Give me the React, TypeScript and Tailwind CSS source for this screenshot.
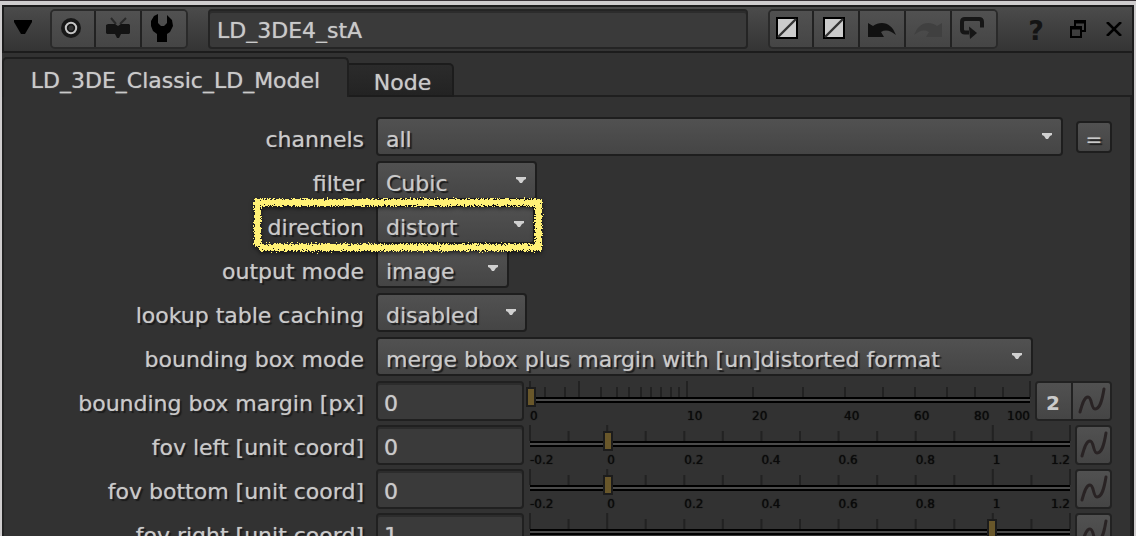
import { useState } from "react";
import type { ReactNode } from "react";

const BUTTON_FACE = "bg-linear-to-b from-[#515151] to-[#454545]";
const LABEL_SHADOW = "[text-shadow:0_0_1px_#8a8a8a,2px_2px_1px_#1a1a1a]";
const SOFT_GLOW = "[text-shadow:0_0_1px_#a0a0a0]";

type Tick = { at: number; major?: boolean };
type Mark = { at: number; text: string };
type Scale = { start: number; end: number; ticks: Tick[]; marks: Mark[] };

const marginScale: Scale = {
  start: 0,
  end: 100,
  ticks: [
    { at: 0, major: true },
    { at: 3 },
    { at: 7 },
    { at: 9.8, major: true },
    { at: 14.2 },
    { at: 17.4 },
    { at: 19.8 },
    { at: 22.2 },
    { at: 24.2 },
    { at: 26.2 },
    { at: 28.2 },
    { at: 29.8 },
    { at: 31.4, major: true },
    { at: 44.6 },
    { at: 54.6 },
    { at: 63 },
    { at: 70.6 },
    { at: 77 },
    { at: 83.4 },
    { at: 89 },
    { at: 94.6 },
    { at: 100, major: true },
  ],
  marks: [
    { at: 0, text: "0" },
    { at: 31.4, text: "10" },
    { at: 44.4, text: "20" },
    { at: 62.8, text: "40" },
    { at: 76.8, text: "60" },
    { at: 88.8, text: "80" },
    { at: 100, text: "100" },
  ],
};

const unitScale: Scale = {
  start: -0.2,
  end: 1.2,
  ticks: Array.from({ length: 15 }, (_, i) => ({
    at: (i * 100) / 14,
    major: i === 0 || i === 2 || i === 12 || i === 14,
  })),
  marks: ["-0.2", "0", "0.2", "0.4", "0.6", "0.8", "1", "1.2"].map((text, i) => ({
    at: (i * 100) / 7,
    text,
  })),
};

function Ruler({ scale, value, label }: { scale: Scale; value: number; label: string }) {
  return (
    <div className="relative h-10 min-w-0 flex-1">
      <svg className="absolute inset-0 h-full w-full overflow-visible" aria-hidden="true">
        {scale.ticks.map((t) => (
          <line
            key={t.at}
            x1={`${t.at}%`}
            x2={`${t.at}%`}
            y1={t.major ? 0 : 6}
            y2={16}
            stroke="#222222"
            strokeWidth={2}
          />
        ))}
        <rect x="0" y="16" width="100%" height="6" fill="#000000" />
        <rect x="0" y="18" width="100%" height="2" fill="#4b4b4b" />
        {scale.marks.map((m) => (
          <text
            key={m.text}
            x={`${m.at}%`}
            y={39}
            textAnchor={m.at === 100 ? "end" : "start"}
            fill="#0a0a0a"
            className="text-[12px] [text-shadow:0_0_1px_#0a0a0a]"
          >
            {m.text}
          </text>
        ))}
      </svg>
      <input
        type="range"
        aria-label={label}
        min={scale.start}
        max={scale.end}
        step="any"
        defaultValue={value}
        className="absolute top-1.5 -left-1 h-5 w-[calc(100%+8px)] cursor-pointer appearance-none bg-transparent outline-none [&::-webkit-slider-thumb]:h-5 [&::-webkit-slider-thumb]:w-2.5 [&::-webkit-slider-thumb]:appearance-none [&::-webkit-slider-thumb]:border-2 [&::-webkit-slider-thumb]:border-[#1c1c1c] [&::-webkit-slider-thumb]:bg-[#69572a]"
      />
    </div>
  );
}

function Row({ id, label, children }: { id: string; label: string; children: ReactNode }) {
  return (
    <div className="flex h-10 items-start gap-3">
      <label htmlFor={id} className={`w-90 shrink-0 pt-[9px] text-right leading-7 whitespace-nowrap ${LABEL_SHADOW}`}>
        {label}
      </label>
      <div className="flex min-w-0 flex-1 items-start">{children}</div>
    </div>
  );
}

function Dropdown({ id, value, width }: { id: string; value: string; width: string }) {
  return (
    <div className={`relative ${width}`}>
      <select
        id={id}
        defaultValue={value}
        className={`h-[39px] w-full appearance-none rounded-[4px] border-2 border-[#1e1e1e] pt-1 pl-2 outline-none ${BUTTON_FACE} ${LABEL_SHADOW}`}
      >
        <option>{value}</option>
      </select>
      <svg className="pointer-events-none absolute top-4 right-[11px] h-1.5 w-2.5" viewBox="0 0 10 6" aria-hidden="true">
        <path d="M0 0h10v2l-2 1-2 3H4L2 3 0 2z" fill="#d0d0d0" />
      </svg>
    </div>
  );
}

function NumberField({ id, value }: { id: string; value: string }) {
  return (
    <input
      id={id}
      type="text"
      defaultValue={value}
      className={`mr-1.5 h-10 w-37 shrink-0 rounded-[4px] border-2 border-[#202020] bg-[#3a3a3a] pt-1 pl-1.5 shadow-[inset_0_2px_0_#2c2c2c] outline-none ${SOFT_GLOW}`}
    />
  );
}

function CurveIcon() {
  return (
    <svg className="h-7 w-7" viewBox="0 0 28 28" fill="none" aria-hidden="true">
      <path
        d="M2 25C4 18 6 10 10 10c4 0 3 12 7 12 5 0 7-8 9-20"
        stroke="#292324"
        strokeWidth="3"
        strokeLinecap="round"
      />
    </svg>
  );
}

function CurveButton({ label }: { label: string }) {
  return (
    <button
      type="button"
      aria-label={label}
      className={`ml-[5px] flex h-10 w-[37px] shrink-0 items-center justify-center rounded-[4px] border-2 border-[#222222] ${BUTTON_FACE}`}
    >
      <CurveIcon />
    </button>
  );
}

function UnitRow({ id, label, value }: { id: string; label: string; value: number }) {
  return (
    <Row id={id} label={label}>
      <NumberField id={id} value={String(value)} />
      <Ruler scale={unitScale} value={value} label={`${label} slider`} />
      <CurveButton label={`${label} animation`} />
    </Row>
  );
}

function HandDrawnFrame() {
  return (
    <svg
      className="pointer-events-none absolute -top-[7px] -left-[123px] z-10 h-[54px] w-[290px] overflow-visible drop-shadow-[0_2px_2px_rgba(0,0,0,0.6)]"
      viewBox="0 0 290 54"
      fill="none"
      aria-hidden="true"
    >
      <filter id="chalk" x="-5" y="-5" width="300" height="64" filterUnits="userSpaceOnUse">
        <feTurbulence type="fractalNoise" baseFrequency="0.7" numOctaves="2" seed="7" result="noise" />
        <feDisplacementMap in="SourceGraphic" in2="noise" scale="7" xChannelSelector="R" yChannelSelector="G" />
      </filter>
      <g filter="url(#chalk)" stroke="#fff176" strokeWidth="7">
        <path d="M1 4.5h288" />
        <path d="M4.5 1v47" />
        <path d="M6 49.5h283" />
        <path d="M285.5 1v52" />
      </g>
    </svg>
  );
}

function ToolButton({ label, children }: { label: string; children: ReactNode }) {
  return (
    <button
      type="button"
      aria-label={label}
      className={`flex h-full w-[46px] items-center justify-center border-r-2 border-[#222222] pb-0.5 first:w-11 first:pr-1 last:w-11 last:border-r-0 last:pr-1 ${BUTTON_FACE}`}
    >
      {children}
    </button>
  );
}

function SwatchIcon() {
  return (
    <svg className="mr-1 h-[22px] w-[22px]" viewBox="0 0 22 22" aria-hidden="true">
      <rect x="1" y="1" width="20" height="20" fill="#cccccc" stroke="#000000" strokeWidth="2" />
      <path d="M2 20L20 2" stroke="#333333" strokeWidth="2.4" />
    </svg>
  );
}

function Header() {
  return (
    <header className="flex h-12 shrink-0 items-center border-2 border-[#1c1c1c] bg-linear-to-b from-[#4b4b4b] to-[#343434]">
      <button type="button" aria-label="Collapse panel" className="ml-2.5 flex h-9 w-[18px] items-center">
        <svg className="-mt-1 h-3.5 w-[18px]" viewBox="0 0 18 14" aria-hidden="true">
          <path d="M0 0h18v2L11 14H7L0 2z" fill="#000000" />
        </svg>
      </button>
      <div className="ml-[18px] flex h-10 w-[138px] shrink-0 overflow-hidden rounded-[5px] border-2 border-[#2a2a2a]">
        <ToolButton label="Center node">
          <svg className="h-5 w-5" viewBox="0 0 20 20" aria-hidden="true">
            <circle cx="10" cy="10" r="10" fill="#171717" />
            <circle cx="10" cy="10" r="5.2" fill="none" stroke="#c4c4c4" strokeWidth="2" />
            <circle cx="10" cy="10" r="2.5" fill="#333333" />
          </svg>
        </ToolButton>
        <ToolButton label="Hide input">
          <svg className="h-[22px] w-6" viewBox="0 0 24 22" aria-hidden="true">
            <path d="M5 1l5 6M20 1l-6 6" stroke="#292929" strokeWidth="2" />
            <path d="M2 7h7l3 2 3-2h8l1 1v8l-1 1h-8l-2 4h-2l-2-4H1l-1-1V8z" fill="#131313" />
          </svg>
        </ToolButton>
        <ToolButton label="Manage knobs">
          <svg className="h-7 w-[22px]" viewBox="0 0 22 28" aria-hidden="true">
            <path d="M7 0v9l3 3h3l3-3V1l5 5 1 6-3 6-3 2v8H6v-8l-4-3-2-5V7l3-5z" fill="#000000" />
          </svg>
        </ToolButton>
      </div>
      <input
        type="text"
        aria-label="Node name"
        defaultValue="LD_3DE4_stA"
        className={`mx-5 h-10 min-w-0 flex-1 rounded-[4px] border-2 border-[#242424] bg-[#3a3a3a] pt-0.5 pl-[7px] shadow-[inset_0_2px_0_#2c2c2c] outline-none ${SOFT_GLOW}`}
      />
      <div className="flex h-10 w-[230px] shrink-0 overflow-hidden rounded-[5px] border-2 border-[#2a2a2a]">
        <ToolButton label="Node color">
          <SwatchIcon />
        </ToolButton>
        <ToolButton label="Viewer color">
          <SwatchIcon />
        </ToolButton>
        <ToolButton label="Undo">
          <svg className="mt-1 h-3.5 w-7" viewBox="0 0 28 14" aria-hidden="true">
            <path d="M0 0l5 3C10-1 18-1 22 3c3 2 4 5 6 9-5-4-10-6-15-3l3 5H0z" fill="#111111" />
          </svg>
        </ToolButton>
        <ToolButton label="Redo">
          <svg className="mt-1 h-3.5 w-7" viewBox="0 0 28 14" aria-hidden="true">
            <path d="M28 0l-5 3C18-1 10-1 6 3 3 5 2 8 0 12c5-4 10-6 15-3l-3 5h16z" fill="#404040" />
          </svg>
        </ToolButton>
        <ToolButton label="Revert">
          <svg className="h-[22px] w-6" viewBox="0 0 24 22" aria-hidden="true">
            <path d="M9 15.500H5c-2 0-3-1-3-3V5c0-2 1-3 3-3h14c2 0 3 1 3 3v5.500" fill="none" stroke="#161616" strokeWidth="4" />
            <path d="M9 9.500l8 6.500-7 6z" fill="#161616" />
          </svg>
        </ToolButton>
      </div>
      <button
        type="button"
        aria-label="Help"
        className="ml-7 w-5 pt-1 text-center text-[27px] leading-8 font-bold text-[#141414]"
      >
        ?
      </button>
      <button type="button" aria-label="Float panel" className="ml-6">
        <svg className="h-[18px] w-4" viewBox="0 0 16 18" fill="none" stroke="#000000" strokeWidth="2" aria-hidden="true">
          <path d="M5 7V1h10v10h-4" />
          <path d="M4 2h12" strokeWidth="3" />
          <path d="M1 7h10v10H1z" />
          <path d="M0 8h12" strokeWidth="3" />
        </svg>
      </button>
      <button type="button" aria-label="Close panel" className="mr-2.5 ml-5">
        <svg className="h-3.5 w-4" viewBox="0 0 16 14" aria-hidden="true">
          <path d="M1 0l14 14M15 0L1 14" stroke="#000000" strokeWidth="2.6" />
        </svg>
      </button>
    </header>
  );
}

export default function App() {
  const [tab, setTab] = useState("model");
  return (
    <div className="flex h-screen flex-col overflow-hidden border-t border-[#393337] bg-[#cfcdce] px-0.5 pt-1 font-['DejaVu_Sans',Verdana,sans-serif] text-[22px] text-[#cacaca]">
      <Header />
      <main className="flex min-h-0 flex-1 flex-col border-r-2 border-[#1c1c1c] bg-[#323232] pt-1">
        <div role="tablist" className="flex h-10 shrink-0 items-end">
          <button
            type="button"
            role="tab"
            aria-selected={tab === "model"}
            onClick={() => setTab("model")}
            className={`h-10 w-[347px] rounded-t-[5px] border-2 border-b-0 border-[#1f1f1f] bg-[#323232] pt-1 whitespace-nowrap ${SOFT_GLOW}`}
          >
            LD_3DE_Classic_LD_Model
          </button>
          <button
            type="button"
            role="tab"
            aria-selected={tab === "node"}
            onClick={() => setTab("node")}
            className={`h-[34px] w-[105px] rounded-tr-[5px] border-2 border-l-0 border-[#1c1c1c] bg-linear-to-b from-[#2b2b2b] to-[#232323] pt-1 pl-1 leading-7 ${SOFT_GLOW}`}
          >
            Node
          </button>
          <div className="h-0.5 flex-1 bg-[#1f1f1f]" />
        </div>
        <div className="flex min-h-0 flex-1 flex-col overflow-hidden border-x-2 border-[#222222] pr-[18px] pt-5">
          <div className="flex flex-col gap-1">
            <Row id="channels" label="channels">
              <Dropdown id="channels" value="all" width="flex-1" />
              <button
                type="button"
                aria-label="Channel expression"
                className={`mt-1 ml-[13px] h-8 w-9 shrink-0 rounded-[4px] border-2 border-[#1e1e1e] pt-1 text-[20px] leading-6 ${BUTTON_FACE} ${LABEL_SHADOW}`}
              >
                =
              </button>
            </Row>
            <Row id="filter" label="filter">
              <Dropdown id="filter" value="Cubic" width="w-[161px]" />
            </Row>
            <Row id="direction" label="direction">
              <div className="relative">
                <Dropdown id="direction" value="distort" width="w-[159px]" />
                <HandDrawnFrame />
              </div>
            </Row>
            <Row id="output" label="output mode">
              <Dropdown id="output" value="image" width="w-[133px]" />
            </Row>
            <Row id="caching" label="lookup table caching">
              <Dropdown id="caching" value="disabled" width="w-[151px]" />
            </Row>
            <Row id="bbox-mode" label="bounding box mode">
              <Dropdown
                id="bbox-mode"
                value="merge bbox plus margin with [un]distorted format"
                width="mr-[79px] flex-1"
              />
            </Row>
            <Row id="bbox-margin" label="bounding box margin [px]">
              <NumberField id="bbox-margin" value="0" />
              <Ruler scale={marginScale} value={0} label="bounding box margin slider" />
              <div className="ml-[5px] flex h-10 w-[77px] shrink-0 overflow-hidden rounded-[4px] border-2 border-[#222222]">
                <button
                  type="button"
                  aria-label="2 channels"
                  className={`w-9 border-r-2 border-[#222222] pt-1 pr-0.5 text-[20px] font-bold ${BUTTON_FACE}`}
                >
                  2
                </button>
                <button
                  type="button"
                  aria-label="bounding box margin animation"
                  className={`flex flex-1 items-center justify-center ${BUTTON_FACE}`}
                >
                  <CurveIcon />
                </button>
              </div>
            </Row>
            <UnitRow id="fov-left" label="fov left [unit coord]" value={0} />
            <UnitRow id="fov-bottom" label="fov bottom [unit coord]" value={0} />
            <UnitRow id="fov-right" label="fov right [unit coord]" value={1} />
          </div>
        </div>
      </main>
    </div>
  );
}
